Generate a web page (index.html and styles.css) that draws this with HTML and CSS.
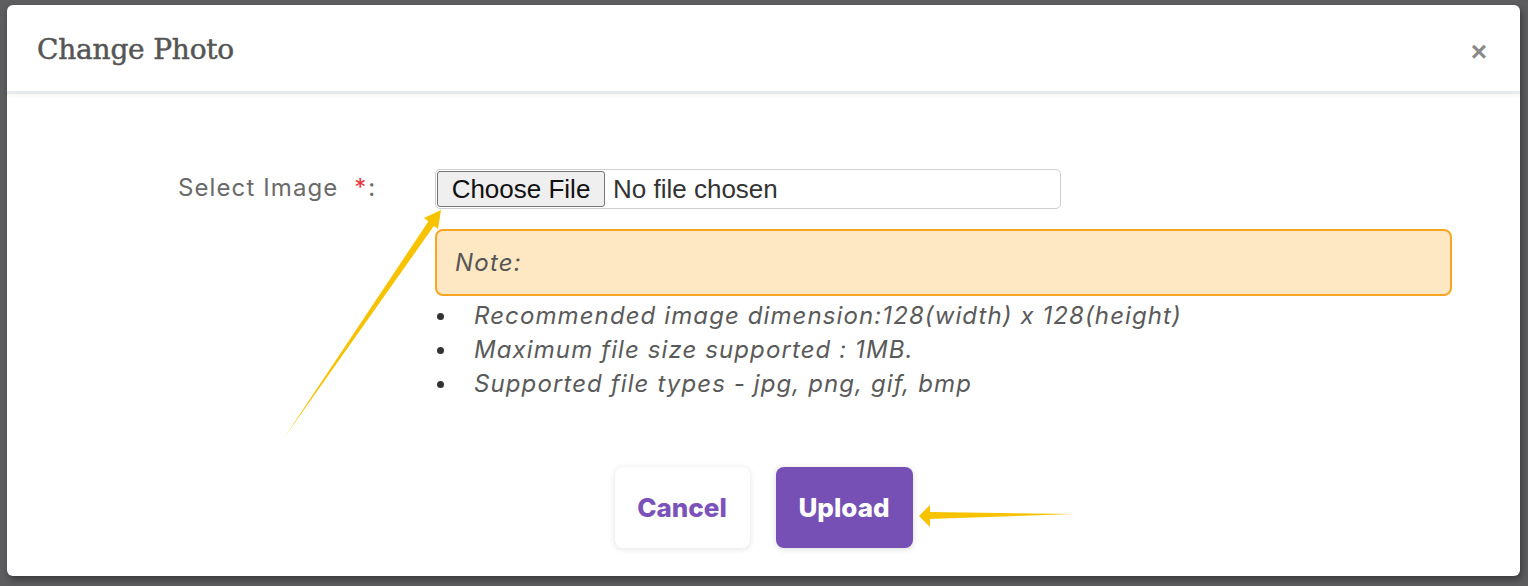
FILE: index.html
```html
<!DOCTYPE html>
<html>
<head>
<meta charset="utf-8">
<title>Change Photo</title>
<link rel="stylesheet" href="styles.css">
</head>
<body>
<div class="backdrop">
  <div class="modal">
    <div class="modal-header">
      <h2 class="modal-title">Change Photo</h2>
      <span class="close">&times;</span>
    </div>
    <div class="modal-body">
      <div class="form-row">
        <label class="label">Select Image <span class="req">*</span>:</label>
        <div class="field">
          <div class="file-input">
            <span class="file-btn">Choose File</span>
            <span class="file-name">No file chosen</span>
          </div>
          <div class="note">Note:</div>
          <ul class="note-list">
            <li>Recommended image dimension:128(width) x 128(height)</li>
            <li>Maximum file size supported : 1MB.</li>
            <li>Supported file types - jpg, png, gif, bmp</li>
          </ul>
        </div>
      </div>
      <div class="actions">
        <button class="btn btn-cancel">Cancel</button>
        <button class="btn btn-upload">Upload</button>
      </div>
    </div>
    <svg class="arrows" width="1528" height="586" viewBox="0 0 1528 586">
      <polygon points="284,438 430,219 436,223" fill="#f7c200"/>
      <polygon points="441,210 424,218 438,229" fill="#f7c200"/>
      <polygon points="1075,514 928,512 928,519" fill="#f7c200"/>
      <polygon points="919,516 930,505 930,527" fill="#f7c200"/>
    </svg>
  </div>
</div>
</body>
</html>
```
FILE: styles.css
```css
html, body {
  margin: 0;
  padding: 0;
}
body {
  width: 1528px;
  height: 586px;
  background: #5d5d5f;
  overflow: hidden;
  font-family: "Inter", "Liberation Sans", sans-serif;
}
.backdrop {
  padding: 5px 8px 10px 7px;
}
.modal {
  background: #fff;
  height: 571px;
  border-radius: 6px;
  box-shadow: 2px 4px 6px rgba(0,0,0,0.35);
  display: flex;
  flex-direction: column;
}
.modal-header {
  height: 86px;
  display: flex;
  align-items: center;
  justify-content: space-between;
  padding: 0 33px 0 30px;
  border-bottom: 3px solid #e6e9ed;
  box-shadow: 0 2px 4px rgba(0,0,0,0.04);
}
.modal-title {
  margin: 0;
  font-family: "DejaVu Serif", "Liberation Serif", serif;
  font-weight: normal;
  font-size: 28px;
  color: #555;
  letter-spacing: -0.2px;
  -webkit-text-stroke: 0.5px #555;
  padding-top: 2px;
}
.close {
  font-family: "Liberation Sans", sans-serif;
  font-size: 28px;
  font-weight: bold;
  color: #8a8a8a;
  line-height: 1;
  padding-top: 8px;
}
.modal-body {
  flex: 1;
  display: flex;
  flex-direction: column;
  padding-top: 75px;
}
.form-row {
  display: flex;
}
.label {
  width: 200px;
  margin-left: 171px;
  margin-right: 57px;
  font-size: 24px;
  letter-spacing: 1.1px;
  color: #6a6a6a;
  padding-top: 4px;
  white-space: nowrap;
}
.req {
  color: #e8343c;
  margin-left: 8px;
  margin-right: 1px;
}
.field {
  width: 1017px;
}
.file-input {
  width: 622px;
  height: 38px;
  border: 1.5px solid #cfcfcf;
  border-radius: 5px;
  display: flex;
  align-items: center;
  padding: 0 1px;
  font-family: "Liberation Sans", sans-serif;
  font-size: 26px;
  color: #222;
}
.file-btn {
  height: 36px;
  width: 168px;
  box-sizing: border-box;
  background: #efefef;
  border: 1px solid #767676;
  border-radius: 3px;
  display: flex;
  align-items: center;
  justify-content: center;
  color: #111;
}
.file-name {
  margin-left: 8px;
  color: #333;
}
.note {
  margin-top: 20px;
  height: 67px;
  box-sizing: border-box;
  border: 2px solid #f6a623;
  border-radius: 8px;
  background: #fee8c4;
  display: flex;
  align-items: center;
  padding-left: 18px;
  font-style: italic;
  font-size: 24px;
  letter-spacing: 1.2px;
  color: #555;
}
.note-list {
  list-style: none;
  margin: 3px 0 0 0;
  padding: 0;
  font-style: italic;
  font-size: 24px;
  letter-spacing: 1.1px;
  line-height: 34px;
  color: #5a5a5a;
}
.note-list li {
  display: flex;
  align-items: center;
}
.note-list li::before {
  content: "";
  width: 7px;
  height: 7px;
  border-radius: 50%;
  background: #333;
  margin-left: 2px;
  margin-right: 30px;
  flex-shrink: 0;
}
.actions {
  display: flex;
  justify-content: center;
  gap: 26px;
  margin-top: 66px;
}
.btn {
  height: 81px;
  border-radius: 8px;
  border: none;
  font-family: "Inter", "Liberation Sans", sans-serif;
  font-weight: 800;
  font-size: 26px;
  cursor: pointer;
}
.btn-cancel {
  width: 135px;
  background: #fff;
  color: #7b52b9;
  box-shadow: 0 1px 6px rgba(0,0,0,0.12);
}
.btn-upload {
  width: 137px;
  background: #7650b5;
  color: #fff;
  box-shadow: 0 1px 6px rgba(0,0,0,0.15);
}
.arrows {
  position: absolute;
  left: 0;
  top: 0;
  pointer-events: none;
}
```
